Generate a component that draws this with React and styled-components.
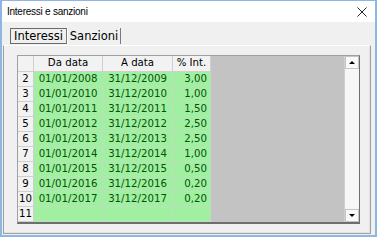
import React from "react";
import styled, { createGlobalStyle } from "styled-components";

const Global = createGlobalStyle`
  html, body { margin: 0; padding: 0; background: #ffffff; }
  #root { width: 378px; height: 242px; }
`;

const Window = styled.div`
  box-sizing: border-box;
  width: 377px;
  height: 237px;
  border: 2px solid #8db6e2;
  border-top: 1px solid #8db6e2;
  display: flex;
  flex-direction: column;
  background: #f0f0f0;
`;

const TitleBar = styled.div`
  height: 21px;
  background: #ffffff;
  display: flex;
  align-items: center;
  justify-content: space-between;
  padding: 0 8px 0 5px;
  font-family: "Liberation Sans", Arial, sans-serif;
  font-size: 10px;
  letter-spacing: -0.25px;
  color: #000;
`;

const CloseIcon = styled.svg`
  width: 10px;
  height: 10px;
  display: block;
`;

const Body = styled.div`
  flex: 1;
  display: flex;
  flex-direction: column;
  padding: 6px 4px 1px 1px;
`;

const TabStrip = styled.div`
  display: flex;
  align-items: stretch;
  height: 16px;
  padding-left: 7px;
  font-family: "DejaVu Sans", Verdana, sans-serif;
  font-size: 11.5px;
  color: #000;
`;

const Tab = styled.div`
  box-sizing: border-box;
  display: flex;
  align-items: center;
  justify-content: center;
  width: ${(p) => p.$w}px;
  border-right: 1px solid #7a7a7a;
  ${(p) =>
    p.$active
      ? `border-top: 1px solid #6b6b6b; border-left: 1px solid #6b6b6b; border-bottom: 1px solid #6b6b6b; box-shadow: 1px 0 0 #ffffff;`
      : `margin-left: 1px;`}
`;

const Page = styled.div`
  box-sizing: border-box;
  flex: 1;
  margin-top: 1px;
  border: 1px solid #9f9f9f;
  border-top-color: #ffffff;
  box-shadow: inset -1px -1px 0 #e3e3e3;
  padding: 9px 10px 9px 13px;
  display: flex;
`;

const Sheet = styled.div`
  box-sizing: border-box;
  flex: 1;
  display: flex;
  border-top: 1px solid #a0a0a0;
  border-left: 1px solid #a0a0a0;
  border-right: 1px solid #6e6e6e;
  border-bottom: 2px solid #6e6e6e;
`;

const Area = styled.div`
  flex: 1;
  background: #c3c3c3;
  display: flex;
  align-items: flex-start;
`;

const Table = styled.div`
  display: flex;
  flex-direction: column;
  font-family: "DejaVu Sans", Verdana, sans-serif;
  font-size: 10.2px;
`;

const Row = styled.div`
  display: grid;
  grid-template-columns: 16px 69px 70px 38px;
  height: ${(p) => (p.$head ? 16 : 15)}px;
`;

const Cell = styled.div`
  box-sizing: border-box;
  display: flex;
  align-items: center;
  justify-content: ${(p) => p.$align || "center"};
  padding: ${(p) => (p.$align === "flex-end" ? "0 3px 0 0" : "0")};
  border-right: 1px solid ${(p) => (p.$head ? "#cfcfcf" : "#c2dcc2")};
  border-bottom: 1px solid ${(p) => (p.$head ? "#cfcfcf" : "#b8e2b8")};
  background: ${(p) => (p.$head ? "#f2f2f2" : "#a1f0a1")};
  color: ${(p) => (p.$head ? "#000000" : "#08500a")};
  white-space: nowrap;
  line-height: 1;
`;

const Scroll = styled.div`
  width: 14px;
  display: flex;
  flex-direction: column;
  justify-content: space-between;
  background: #f7f7f7;
  border-left: 1px solid #d0d0d0;
`;

const ScrollBtn = styled.div`
  box-sizing: border-box;
  height: 13px;
  display: flex;
  align-items: center;
  justify-content: center;
  background: #f9f9f9;
  border: 1px solid #c4c4c4;
`;

const Arrow = styled.div`
  width: 0;
  height: 0;
  border-left: 3px solid transparent;
  border-right: 3px solid transparent;
  ${(p) =>
    p.$down
      ? `border-top: 3px solid #000;`
      : `border-bottom: 3px solid #000;`}
`;

const rows = [
  ["2", "01/01/2008", "31/12/2009", "3,00"],
  ["3", "01/01/2010", "31/12/2010", "1,00"],
  ["4", "01/01/2011", "31/12/2011", "1,50"],
  ["5", "01/01/2012", "31/12/2012", "2,50"],
  ["6", "01/01/2013", "31/12/2013", "2,50"],
  ["7", "01/01/2014", "31/12/2014", "1,00"],
  ["8", "01/01/2015", "31/12/2015", "0,50"],
  ["9", "01/01/2016", "31/12/2016", "0,20"],
  ["10", "01/01/2017", "31/12/2017", "0,20"],
  ["11", "", "", ""],
];

export default function App() {
  return (
    <>
      <Global />
      <Window>
        <TitleBar>
          <span>Interessi e sanzioni</span>
          <CloseIcon viewBox="0 0 10 10">
            <path d="M0.5 0.5 L9.5 9.5 M9.5 0.5 L0.5 9.5" stroke="#222" strokeWidth="1" />
          </CloseIcon>
        </TitleBar>
        <Body>
          <TabStrip>
            <Tab $active $w={57}>Interessi</Tab>
            <Tab $w={53}>Sanzioni</Tab>
          </TabStrip>
          <Page>
            <Sheet>
              <Area>
                <Table>
                  <Row $head>
                    <Cell $head></Cell>
                    <Cell $head>Da data</Cell>
                    <Cell $head>A data</Cell>
                    <Cell $head>% Int.</Cell>
                  </Row>
                  {rows.map((r) => (
                    <Row key={r[0]}>
                      <Cell $head>{r[0]}</Cell>
                      <Cell>{r[1]}</Cell>
                      <Cell>{r[2]}</Cell>
                      <Cell $align="flex-end">{r[3]}</Cell>
                    </Row>
                  ))}
                </Table>
              </Area>
              <Scroll>
                <ScrollBtn>
                  <Arrow />
                </ScrollBtn>
                <ScrollBtn>
                  <Arrow $down />
                </ScrollBtn>
              </Scroll>
            </Sheet>
          </Page>
        </Body>
      </Window>
    </>
  );
}
